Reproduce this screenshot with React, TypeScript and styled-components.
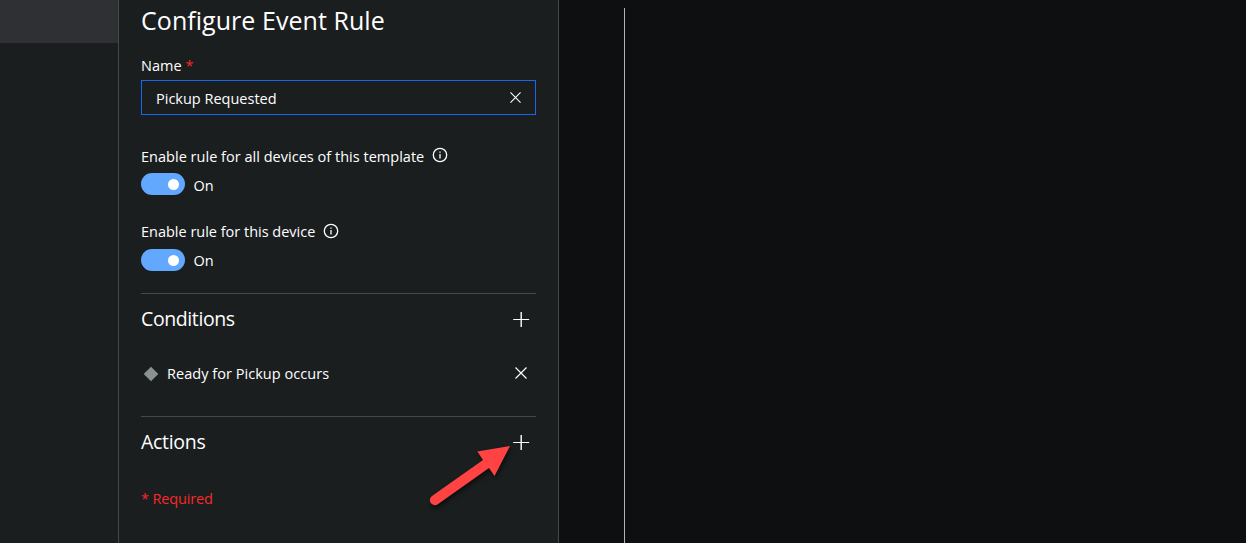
import React from "react";
import styled, { createGlobalStyle } from "styled-components";

const GlobalStyle = createGlobalStyle`
  * { box-sizing: border-box; }
  html, body { margin: 0; background: #0d0f10; overflow: hidden; }
  body { font-family: "Open Sans", "Noto Sans", sans-serif; font-size: 14.5px; line-height: 20px; color: #fff; }
`;

const Page = styled.div`
  position: relative;
  display: flex;
  height: 543px;
  overflow: hidden;
`;

const Rail = styled.aside`
  flex: none;
  width: 118px;
  background: #1b1e1f;
`;

const RailItem = styled.div`
  height: 43px;
  background: #2f3033;
`;

const Panel = styled.main`
  flex: none;
  display: flex;
  flex-direction: column;
  width: 441px;
  padding: 0 22px;
  background: #1b1e1f;
  border-left: 1px solid #484848;
  border-right: 1px solid #484848;
`;

const Canvas = styled.section`
  flex: 1;
  padding: 8px 0 0 65px;
`;

const CanvasFrame = styled.div`
  height: 100%;
  border-left: 1px solid #b3b3b3;
`;

const Text = styled.span<{ $track?: number }>`
  white-space: nowrap;
  letter-spacing: ${(p) => p.$track ?? 0}px;
`;

const Title = styled.h1`
  margin: 3px 0 0;
  font-size: 25px;
  font-weight: 400;
  line-height: 34px;
  white-space: nowrap;
  letter-spacing: 0.05px;
`;

const Label = styled.label<{ $top: number }>`
  display: flex;
  align-items: center;
  height: 20px;
  margin-top: ${(p) => p.$top}px;
`;

const Star = styled.span`
  margin-left: 4px;
  color: #f82828;
`;

const Field = styled.div`
  display: flex;
  align-items: center;
  justify-content: space-between;
  height: 35px;
  margin-top: 4px;
  padding: 2px 14px 0 14px;
  border: 1px solid #1668f0;

  svg { margin-top: -2px; }
`;

const ToggleRow = styled.div<{ $top: number }>`
  display: flex;
  align-items: center;
  gap: 8.5px;
  height: 22px;
  margin-top: ${(p) => p.$top}px;
`;

const Toggle = styled.button`
  display: flex;
  align-items: center;
  justify-content: flex-end;
  width: 44px;
  height: 22px;
  padding: 0 6px 0 0;
  border: 0;
  border-radius: 11px;
  background: #62a8ff;
`;

const Knob = styled.span`
  width: 11px;
  height: 11px;
  border-radius: 50%;
  background: #fff;
`;

const ToggleText = styled(Text)<{ $drop: number }>`
  padding-top: ${(p) => p.$drop}px;
`;

const Section = styled.section<{ $top: number }>`
  margin-top: ${(p) => p.$top}px;
  border-top: 1px solid #484848;
`;

const SectionHead = styled.header`
  display: flex;
  align-items: center;
  justify-content: space-between;
  height: 28px;
  margin-top: 12px;
  padding-right: 6px;
`;

const SectionTitle = styled.h2<{ $track: number }>`
  margin: 0;
  padding-bottom: 2px;
  font-size: 19.5px;
  font-weight: 400;
  line-height: 28px;
  letter-spacing: ${(p) => p.$track}px;
`;

const Condition = styled.div`
  display: flex;
  align-items: center;
  height: 20px;
  margin-top: 30px;
  padding: 0 9px 0 2px;

  svg:last-child { margin-top: -3px; }
`;

const ConditionText = styled(Text)`
  flex: 1;
  margin-left: 8px;
`;

const Required = styled.p`
  margin: 32px 0 0;
  color: #f82828;
`;

const Pointer = styled.svg`
  position: absolute;
  left: 422px;
  top: 438px;
  filter: drop-shadow(1px 3px 2px rgba(0, 0, 0, 0.55));
`;

const InfoSvg = styled.svg<{ $lift: number }>`
  margin: 0 0 ${(p) => p.$lift}px 8px;
`;

const InfoIcon = ({ lift }: { lift: number }) => (
  <InfoSvg $lift={lift} width="16" height="16" viewBox="0 0 16 16" fill="none" stroke="#fff">
    <circle cx="8" cy="8" r="6.7" strokeWidth="1.3" />
    <path d="M8 7v4.4M8 4.6v1.2" strokeWidth="1.3" />
  </InfoSvg>
);

const CrossIcon = ({ size }: { size: number }) => (
  <svg width={size} height={size} viewBox="0 0 12 12" fill="none" stroke="#fff" strokeWidth="1.15">
    <path d="M.5.5l11 11M11.5.5l-11 11" />
  </svg>
);

const PlusIcon = () => (
  <svg width="17" height="16" viewBox="0 0 17 16" fill="none" stroke="#fff">
    <path d="M8.2 0v15" strokeWidth="1.4" />
    <path d="M.2 7.5h16" />
  </svg>
);

export default function App() {
  return (
    <>
      <GlobalStyle />
      <Page>
        <Rail>
          <RailItem />
        </Rail>
        <Panel>
          <Title>Configure Event Rule</Title>
          <Label $top={19}>
            <Text>Name</Text>
            <Star>*</Star>
          </Label>
          <Field>
            <Text>Pickup Requested</Text>
            <CrossIcon size={11} />
          </Field>
          <Label $top={32}>
            <Text $track={0.02}>Enable rule for all devices of this template</Text>
            <InfoIcon lift={4} />
          </Label>
          <ToggleRow $top={6}>
            <Toggle><Knob /></Toggle>
            <ToggleText $drop={3}>On</ToggleText>
          </ToggleRow>
          <Label $top={27}>
            <Text $track={-0.01}>Enable rule for this device</Text>
            <InfoIcon lift={2} />
          </Label>
          <ToggleRow $top={7}>
            <Toggle><Knob /></Toggle>
            <ToggleText $drop={2}>On</ToggleText>
          </ToggleRow>
          <Section $top={22}>
            <SectionHead>
              <SectionTitle $track={-0.4}>Conditions</SectionTitle>
              <PlusIcon />
            </SectionHead>
            <Condition>
              <svg width="16" height="16" viewBox="0 0 16 16">
                <path d="M8 .7L15.3 8 8 15.3.7 8z" fill="#899192" />
              </svg>
              <ConditionText $track={0.04}>Ready for Pickup occurs</ConditionText>
              <CrossIcon size={12} />
            </Condition>
          </Section>
          <Section $top={32}>
            <SectionHead>
              <SectionTitle $track={-0.3}>Actions</SectionTitle>
              <PlusIcon />
            </SectionHead>
          </Section>
          <Required><Text $track={-0.16}>* Required</Text></Required>
        </Panel>
        <Canvas>
          <CanvasFrame />
        </Canvas>
        <Pointer width="96" height="76" viewBox="0 0 96 76">
          <path d="M88 8L55.300 13.500L61 22L10 58A5 5 0 0 0 15.800 66.200L67 30L72.500 38Z" fill="#ff4343" />
        </Pointer>
      </Page>
    </>
  );
}
